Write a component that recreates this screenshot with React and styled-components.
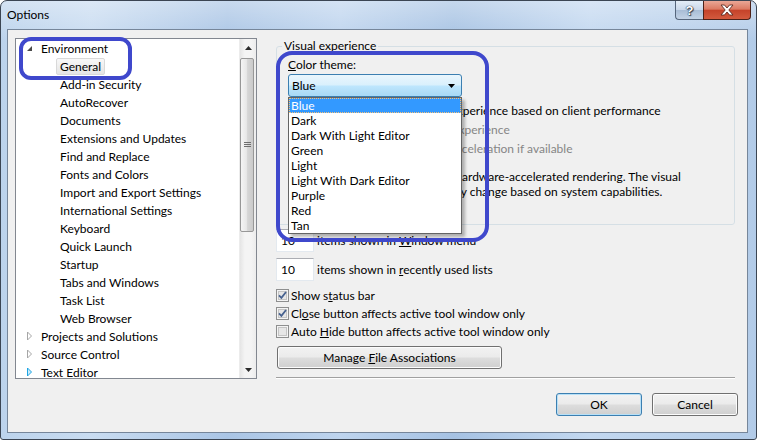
import React from "react";
import styled, { createGlobalStyle } from "styled-components";

const GlobalStyle = createGlobalStyle`
  html, body {
    margin: 0;
    padding: 0;
    background: #ffffff;
  }
  body {
    font-family: Lato, "Liberation Sans", sans-serif;
    font-size: 12px;
    color: #000;
  }
  * {
    box-sizing: border-box;
  }
`;

const Window = styled.div`
  position: relative;
  width: 757px;
  height: 440px;
  border: 1px solid #3b4553;
  border-radius: 7px 7px 3px 3px;
  overflow: hidden;
  display: flex;
  flex-direction: column;
  background: linear-gradient(180deg, rgba(255, 255, 255, 0.35), rgba(255, 255, 255, 0) 40px),
    linear-gradient(90deg, #bcd3ec 0%, #c9dcf1 12%, #aac5e5 30%, #bed4ee 45%, #a6c2e3 60%, #c3d8f0 78%, #b2cbe8 100%);
`;

const TitleBar = styled.div`
  height: 28px;
  display: flex;
  align-items: flex-start;
  padding: 0 5px 0 6px;
`;

const Title = styled.div`
  line-height: 28px;
  font-size: 12px;
  color: #000;
`;

const CaptionButtons = styled.div`
  margin-left: auto;
  display: flex;
  height: 19px;
`;

const HelpButton = styled.div`
  width: 28px;
  height: 19px;
  border: 1px solid #56667c;
  border-right: none;
  border-top: none;
  border-radius: 0 0 0 4px;
  background: linear-gradient(180deg, #e4edf7 0%, #cad8ea 48%, #a9bdd6 52%, #c3d3e6 100%);
  display: flex;
  align-items: center;
  justify-content: center;
  color: #fff;
  font-family: "Liberation Sans", sans-serif;
  font-weight: bold;
  font-size: 13px;
  text-shadow: 0 0 1px #1d2a3a, 0 0 1px #1d2a3a, 1px 1px 1px #34435a;
`;

const CloseButton = styled.div`
  width: 48px;
  height: 19px;
  border: 1px solid #4d2118;
  border-top: none;
  border-radius: 0 0 4px 0;
  background: linear-gradient(180deg, #eaa796 0%, #dc7a63 45%, #c5432a 52%, #d35a3e 100%);
  display: flex;
  align-items: center;
  justify-content: center;
`;

const Client = styled.div`
  flex: 1;
  margin: 0 8px 6px 6px;
  border: 1px solid #76869a;
  background: #f0f0f0;
  padding: 8px 11px 0 7px;
  display: flex;
  flex-direction: column;
`;

const MainRow = styled.div`
  display: flex;
  gap: 19px;
  height: 341px;
`;

const TreePanel = styled.div`
  width: 242px;
  height: 341px;
  border: 1px solid #828790;
  background: #fff;
  display: flex;
  overflow: hidden;
`;

const TreeList = styled.div`
  flex: 1;
  overflow: hidden;
`;

const TreeRow = styled.div`
  height: 18px;
  display: flex;
  align-items: center;
  padding-left: ${p => p.indent}px;
  white-space: nowrap;
`;

const Expander = styled.span`
  width: 7px;
  margin-right: 8px;
  display: flex;
  align-items: center;
  justify-content: center;
`;

const NodeLabel = styled.span`
  height: 17px;
  line-height: 15px;
  padding: 0 3px;
  border: 1px solid ${p => (p.selected ? "#d9d9d9" : "transparent")};
  border-radius: 2px;
  background: ${p => (p.selected ? "linear-gradient(180deg, #f8f8f8, #e5e5e5)" : "transparent")};
`;

const ScrollBar = styled.div`
  width: 17px;
  display: flex;
  flex-direction: column;
  background: linear-gradient(90deg, #e5e5e5 0%, #f4f4f4 30%, #f4f4f4 70%, #ececec 100%);
  border-left: 1px solid #ececec;
`;

const ScrollArrow = styled.div`
  height: 17px;
  display: flex;
  align-items: center;
  justify-content: center;
`;

const ScrollThumb = styled.div`
  height: 174px;
  margin: 2px 2px 0 0;
  border: 1px solid #979797;
  border-radius: 2px;
  background: linear-gradient(90deg, #f5f5f5 0%, #e8e8e8 45%, #d6d6d6 55%, #cacaca 100%);
  display: flex;
  align-items: center;
  justify-content: center;
`;

const ScrollTrack = styled.div`
  flex: 1;
`;

const RightPanel = styled.div`
  width: 459px;
  display: flex;
  flex-direction: column;
`;

const GroupBox = styled.fieldset`
  margin: 0;
  height: 187px;
  padding: 3px 11px 0 11px;
  border: 1px solid #d5dfe5;
  border-radius: 3px;
  min-width: 0;
`;

const Legend = styled.legend`
  padding: 0 2px;
  margin-left: -6px;
  line-height: 16px;
`;

const FieldLabel = styled.div`
  line-height: 15px;
`;

const ComboWrap = styled.div`
  position: relative;
  width: 174px;
  height: 23px;
  margin-top: 2px;
`;

const ComboBox = styled.div`
  height: 23px;
  border: 1px solid #3c7fb1;
  border-radius: 3px;
  background: linear-gradient(180deg, #eaf6fd 0%, #d9f0fc 48%, #bee6fd 52%, #a7d9f5 100%);
  display: flex;
  align-items: center;
  padding: 0 6px 0 3px;
  justify-content: space-between;
`;

const DropList = styled.div`
  position: absolute;
  top: 23px;
  left: 0;
  width: 174px;
  z-index: 5;
  border: 1px solid #646464;
  background: #fff;
  box-shadow: 3px 3px 3px rgba(0, 0, 0, 0.28);
`;

const DropItem = styled.div`
  height: 15px;
  line-height: 15px;
  padding-left: 2px;
  color: ${p => (p.active ? "#fff" : "#000")};
  background: ${p => (p.active ? "#3399ff" : "transparent")};
  outline: ${p => (p.active ? "1px dotted #f7c27a" : "none")};
  outline-offset: -1px;
`;

const OptionRow = styled.div`
  height: 19px;
  display: flex;
  align-items: center;
  gap: 5px;
  padding-left: ${p => p.indent || 0}px;
  margin-top: ${p => p.top || 0}px;
  color: ${p => (p.disabled ? "#868686" : "#000")};
  white-space: nowrap;
`;

const Para = styled.div`
  margin-top: 11px;
  padding-left: 4px;
  line-height: 15px;
`;

const NumberRow = styled.div`
  display: flex;
  align-items: center;
  gap: 3px;
  margin-top: ${p => p.top}px;
  height: 23px;
`;

const NumberBox = styled.div`
  width: 38px;
  height: 23px;
  background: #fff;
  border: 1px solid #e3e9ef;
  border-top-color: #abadb3;
  padding-left: 4px;
  line-height: 21px;
`;

const CheckRow = styled.div`
  height: 18px;
  display: flex;
  align-items: center;
  gap: 2px;
  margin-top: ${p => p.top || 0}px;
`;

const PushButton = styled.div`
  width: ${p => p.width}px;
  height: 23px;
  border: 1px solid ${p => (p.focused ? "#3c7fb1" : "#707070")};
  border-radius: 3px;
  background: linear-gradient(180deg, #f2f2f2 0%, #ebebeb 48%, #dddddd 52%, #cfcfcf 100%);
  box-shadow: ${p => (p.focused ? "inset 0 0 0 1px #b7e0f7" : "inset 0 0 0 1px #fcfcfc")};
  display: flex;
  align-items: center;
  justify-content: center;
  margin-top: ${p => p.top || 0}px;
  margin-left: ${p => p.left || 0}px;
`;

const Separator = styled.div`
  margin-top: 8px;
  height: 2px;
  border-top: 1px solid #a0a0a0;
  border-bottom: 1px solid #ffffff;
`;

const ButtonBar = styled.div`
  margin-top: auto;
  margin-right: -2px;
  display: flex;
  justify-content: flex-end;
  gap: 10px;
  padding-bottom: 16px;
`;

const Highlight = styled.div`
  position: absolute;
  left: ${p => p.x}px;
  top: ${p => p.y}px;
  width: ${p => p.w}px;
  height: ${p => p.h}px;
  border: 4px solid #3f48cc;
  border-radius: ${p => p.r}px;
  pointer-events: none;
  z-index: 10;
`;

const ExpandedIcon = () => (
  <svg width="7" height="7" viewBox="0 0 7 7">
    <polygon points="6,1 6,6 1,6" fill="#4a4a4a" />
  </svg>
);

const CollapsedIcon = ({ hot }) => (
  <svg width="7" height="10" viewBox="0 0 7 10">
    <polygon
      points="1.5,1 5.5,5 1.5,9"
      fill={hot ? "#c9ecfb" : "none"}
      stroke={hot ? "#1ea4e3" : "#a6a6a6"}
    />
  </svg>
);

const CheckBox = ({ checked }) => (
  <svg width="13" height="13" viewBox="0 0 13 13">
    <rect x="0.5" y="0.5" width="12" height="12" fill="#f4f4f4" stroke="#8e8f8f" />
    <rect x="2.5" y="2.5" width="8" height="8" fill="#e6e6e6" stroke="#c4c4c4" />
    {checked && (
      <path d="M3 6.3 L5.4 8.8 L10 3" fill="none" stroke="#46618f" strokeWidth="1.8" />
    )}
  </svg>
);

const Radio = () => (
  <svg width="13" height="13" viewBox="0 0 13 13">
    <circle cx="6.5" cy="6.5" r="6" fill="#f4f4f4" stroke="#b1b1b1" />
  </svg>
);

const children = [
  "Add-in Security",
  "AutoRecover",
  "Documents",
  "Extensions and Updates",
  "Find and Replace",
  "Fonts and Colors",
  "Import and Export Settings",
  "International Settings",
  "Keyboard",
  "Quick Launch",
  "Startup",
  "Tabs and Windows",
  "Task List",
  "Web Browser"
];

const themes = [
  "Blue",
  "Dark",
  "Dark With Light Editor",
  "Green",
  "Light",
  "Light With Dark Editor",
  "Purple",
  "Red",
  "Tan"
];

const App = () => (
  <>
    <GlobalStyle />
    <Window>
      <TitleBar>
        <Title>Options</Title>
        <CaptionButtons>
          <HelpButton>?</HelpButton>
          <CloseButton>
            <svg width="14" height="12" viewBox="0 0 14 12">
              <path
                d="M1 1 H4.5 L7 4 L9.5 1 H13 L8.8 6 L13 11 H9.5 L7 8 L4.5 11 H1 L5.2 6 Z"
                fill="#fff"
                stroke="#5a2a22"
                strokeWidth="0.9"
              />
            </svg>
          </CloseButton>
        </CaptionButtons>
      </TitleBar>

      <Client>
        <MainRow>
          <TreePanel>
            <TreeList>
              <TreeRow indent={10}>
                <Expander>
                  <ExpandedIcon />
                </Expander>
                Environment
              </TreeRow>
              <TreeRow indent={40}>
                <NodeLabel selected>General</NodeLabel>
              </TreeRow>
              {children.map(c => (
                <TreeRow indent={40} key={c}>
                  <NodeLabel>{c}</NodeLabel>
                </TreeRow>
              ))}
              <TreeRow indent={10}>
                <Expander>
                  <CollapsedIcon />
                </Expander>
                Projects and Solutions
              </TreeRow>
              <TreeRow indent={10}>
                <Expander>
                  <CollapsedIcon />
                </Expander>
                Source Control
              </TreeRow>
              <TreeRow indent={10}>
                <Expander>
                  <CollapsedIcon hot />
                </Expander>
                Text Editor
              </TreeRow>
            </TreeList>
            <ScrollBar>
              <ScrollArrow>
                <svg width="7" height="4" viewBox="0 0 7 4">
                  <polygon points="3.5,0 7,4 0,4" fill="#2b2b2b" />
                </svg>
              </ScrollArrow>
              <ScrollThumb>
                <svg width="7" height="6" viewBox="0 0 7 6">
                  <path d="M0 0.5 H7 M0 2.5 H7 M0 4.5 H7" stroke="#6e6e6e" strokeWidth="1" />
                </svg>
              </ScrollThumb>
              <ScrollTrack />
              <ScrollArrow>
                <svg width="7" height="4" viewBox="0 0 7 4">
                  <polygon points="0,0 7,0 3.5,4" fill="#2b2b2b" />
                </svg>
              </ScrollArrow>
            </ScrollBar>
          </TreePanel>

          <RightPanel>
            <GroupBox>
              <Legend>Visual experience</Legend>
              <FieldLabel>
                <u>C</u>olor theme:
              </FieldLabel>
              <ComboWrap>
                <ComboBox>
                  <span>Blue</span>
                  <svg width="7" height="4" viewBox="0 0 7 4">
                    <polygon points="0,0 7,0 3.5,4" fill="#000" />
                  </svg>
                </ComboBox>
                <DropList>
                  {themes.map(t => (
                    <DropItem key={t} active={t === "Blue"}>
                      {t}
                    </DropItem>
                  ))}
                </DropList>
              </ComboWrap>
              <OptionRow top={4} indent={2}>
                <CheckBox checked />
                <span>Automatically adjust visual experience based on client performance</span>
              </OptionRow>
              <OptionRow indent={36} disabled>
                <Radio />
                <span>Use rich client visual experience</span>
              </OptionRow>
              <OptionRow indent={22} disabled>
                <Radio />
                <span>Use hardware graphics acceleration if available</span>
              </OptionRow>
              <Para>
                Visual Studio is currently using hardware-accelerated rendering. The visual
                <br />
                experience settings automatically change based on system capabilities.
              </Para>
            </GroupBox>

            <NumberRow top={4}>
              <NumberBox>10</NumberBox>
              <span>
                items shown in <u>W</u>indow menu
              </span>
            </NumberRow>
            <NumberRow top={6}>
              <NumberBox>10</NumberBox>
              <span>
                items shown in <u>r</u>ecently used lists
              </span>
            </NumberRow>

            <CheckRow top={5}>
              <CheckBox checked />
              <span>
                Show s<u>t</u>atus bar
              </span>
            </CheckRow>
            <CheckRow>
              <CheckBox checked />
              <span>
                Cl<u>o</u>se button affects active tool window only
              </span>
            </CheckRow>
            <CheckRow>
              <CheckBox />
              <span>
                Auto <u>H</u>ide button affects active tool window only
              </span>
            </CheckRow>

            <PushButton width={225} top={6} left={1}>
              <span>
                Manage <u>F</u>ile Associations
              </span>
            </PushButton>
            <Separator />
          </RightPanel>
        </MainRow>

        <ButtonBar>
          <PushButton width={86} focused>
            OK
          </PushButton>
          <PushButton width={86}>Cancel</PushButton>
        </ButtonBar>
      </Client>

      <Highlight x={18} y={36} w={113} h={43} r={12} />
      <Highlight x={275} y={50} w={213} h={191} r={16} />
    </Window>
  </>
);

export default App;
